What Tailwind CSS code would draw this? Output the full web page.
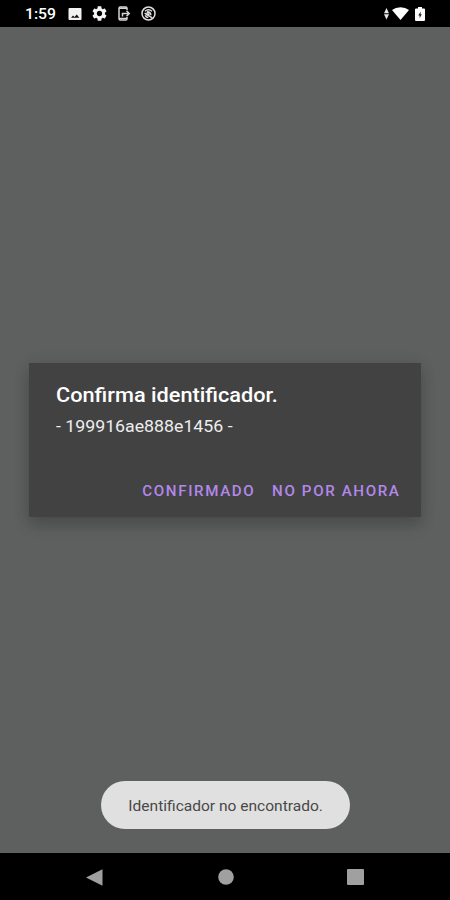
<!DOCTYPE html>
<html lang="es">
<head>
    <meta charset="UTF-8">
    <meta name="viewport" content="width=device-width, initial-scale=1.0">
    <title>Confirma identificador</title>
    <script src="https://cdn.jsdelivr.net/npm/@tailwindcss/browser@4"></script>
</head>
<body class="bg-black font-['Roboto',sans-serif]">
    <div class="relative flex h-[900px] w-[450px] flex-col overflow-hidden bg-[#5d605e]">
        <!-- Status bar -->
        <header class="flex h-[27px] shrink-0 items-center bg-black pr-[25px] pl-[25px] text-white">
            <span class="w-[43px] origin-left scale-x-[1.05] pt-[2px] text-[15px] leading-none font-medium whitespace-nowrap">1:59</span>
            <div class="flex items-center gap-[10px]">
                <svg class="h-[14px] w-[14px]" viewBox="0 0 14 14">
                    <rect x="0.5" y="1" width="13" height="12" rx="1" fill="#f2f2f2"/>
                    <path d="M3 10.800 5 8.500l1.500 1.500 2.300-2.500 2.500 3.300z" fill="#111"/>
                </svg>
                <svg class="h-[15px] w-[15px]" viewBox="2 2 20 20" fill="#f5f5f5">
                    <path d="M19.14 12.94c.04-.3.06-.61.06-.94 0-.32-.02-.64-.07-.94l2.03-1.58c.18-.14.23-.41.12-.61l-1.92-3.32c-.12-.22-.37-.29-.59-.22l-2.39.96c-.5-.38-1.03-.7-1.62-.94l-.36-2.54c-.04-.24-.24-.41-.48-.41h-3.84c-.24 0-.43.17-.47.41l-.36 2.54c-.59.24-1.13.57-1.62.94l-2.39-.96c-.22-.08-.47 0-.59.22L2.740 8.870c-.12.21-.08.47.12.61l2.030 1.580c-.05.3-.09.63-.09.94s.02.64.07.94l-2.030 1.580c-.18.14-.23.41-.12.61l1.920 3.320c.12.22.37.29.59.22l2.390-.96c.5.38 1.030.7 1.620.94l.36 2.540c.05.24.24.41.48.41h3.840c.24 0 .44-.17.47-.41l.36-2.540c.59-.24 1.130-.56 1.620-.94l2.390.96c.22.08.47 0 .59-.22l1.920-3.320c.12-.22.07-.47-.12-.61l-2.010-1.580zM12 15.600c-1.980 0-3.600-1.620-3.600-3.600s1.620-3.600 3.600-3.600 3.600 1.620 3.600 3.600-1.620 3.600-3.600 3.600z"/>
                </svg>
                <svg class="h-[15px] w-[14px]" viewBox="0 0 14 15" fill="none" stroke="#d4d4d4" stroke-width="1.5">
                    <path d="M10 4V2.200Q10 1 8.800 1H3.200Q2 1 2 2.200v10.600Q2 14 3.200 14h5.600Q10 14 10 12.800V11"/>
                    <path d="M2 2.300h8M2 12.600h8"/>
                    <path d="M5.500 10.500V7.500h6M9.500 4.800l2.700 2.700-2.700 2.700"/>
                </svg>
                <svg class="h-[15px] w-[15px]" viewBox="0 0 15 15" fill="none" stroke="#dedede" stroke-width="1.500">
                    <circle cx="7.500" cy="7.500" r="6.500"/>
                    <path d="M4 5.200Q7.500 2.200 11 5.200M3.600 7.200 11.200 11.800M6 5.800Q9.800 5.600 9.800 9.200M4.300 9.200Q4.800 11.200 7.300 11.600"/>
                    <circle cx="7" cy="7.700" r="1.100"/>
                </svg>
            </div>
            <div class="ml-auto flex items-center">
                <svg class="mr-[3px] h-[12px] w-[5px]" viewBox="0 0 5 12" fill="#e8e8e8">
                    <path d="M2.500 0 5 5.200H0zM2.500 11.500 5 6.300H0z"/>
                </svg>
                <svg class="mr-[6px] h-[13px] w-[17px]" viewBox="0 0 17 13" fill="#fff">
                    <path d="M8.500 13 0 3Q3.500 0.200 8.500 0.200T17 3z"/>
                </svg>
                <svg class="h-[14px] w-[10px]" viewBox="0 0 10 14">
                    <path d="M3 0h4v1.500h2q1 0 1 1V13q0 1-1 1H1q-1 0-1-1V2.500q0-1 1-1h2z" fill="#fff"/>
                    <path d="M5.600 4.500v2.800h1.200L4.600 11.300V8.600H3.300z" fill="#222"/>
                </svg>
            </div>
        </header>

        <main class="flex flex-1 flex-col">
            <!-- Dialog -->
            <section class="mx-[29px] mt-[336px] flex h-[154px] flex-col bg-[#424242] pt-[20px] pr-[21px] pl-[26.500px] shadow-[0_8px_14px_rgba(0,0,0,0.18),0_1px_16px_rgba(0,0,0,0.08)]">
                <h1 class="origin-left scale-x-[1.086] text-[20px] leading-6 font-medium whitespace-nowrap text-white">Confirma identificador.</h1>
                <p class="mt-[10px] origin-left scale-x-[1.108] text-[16px] leading-5 whitespace-nowrap text-[#ededed]">- 199916ae888e1456 -</p>
                <div class="mt-[44px] flex origin-right scale-x-[1.08] justify-end gap-[15.500px] text-[14px] leading-5 font-medium whitespace-nowrap text-[#b388eb]">
                    <button class="tracking-[1.5px]">CONFIRMADO</button>
                    <button class="tracking-[1.5px]">NO POR AHORA</button>
                </div>
            </section>

            <!-- Toast -->
            <div class="mt-auto mb-[24px] ml-[101px] flex h-[48px] w-[249px] items-center justify-center rounded-full bg-[#e0e0e0] pt-[2px]">
                <span class="scale-x-[1.110] text-[14px] leading-5 whitespace-nowrap text-[#484848]">Identificador no encontrado.</span>
            </div>
        </main>

        <!-- Navigation bar -->
        <nav class="flex h-[47px] shrink-0 items-center justify-between bg-black pt-px pr-[86px] pl-[86px]">
            <svg class="h-[17px] w-[17px]" viewBox="0 0 17 17" fill="#a0a0a0"><path d="M0 8.500 16.500 0.300v16.500z"/></svg>
            <svg class="ml-px h-[16px] w-[16px]" viewBox="0 0 16 16" fill="#a0a0a0"><circle cx="8" cy="8" r="7.800"/></svg>
            <svg class="h-[16px] w-[17px]" viewBox="0 0 17 16" fill="#a0a0a0"><rect width="17" height="16" rx="1"/></svg>
        </nav>
    </div>
</body>
</html>
